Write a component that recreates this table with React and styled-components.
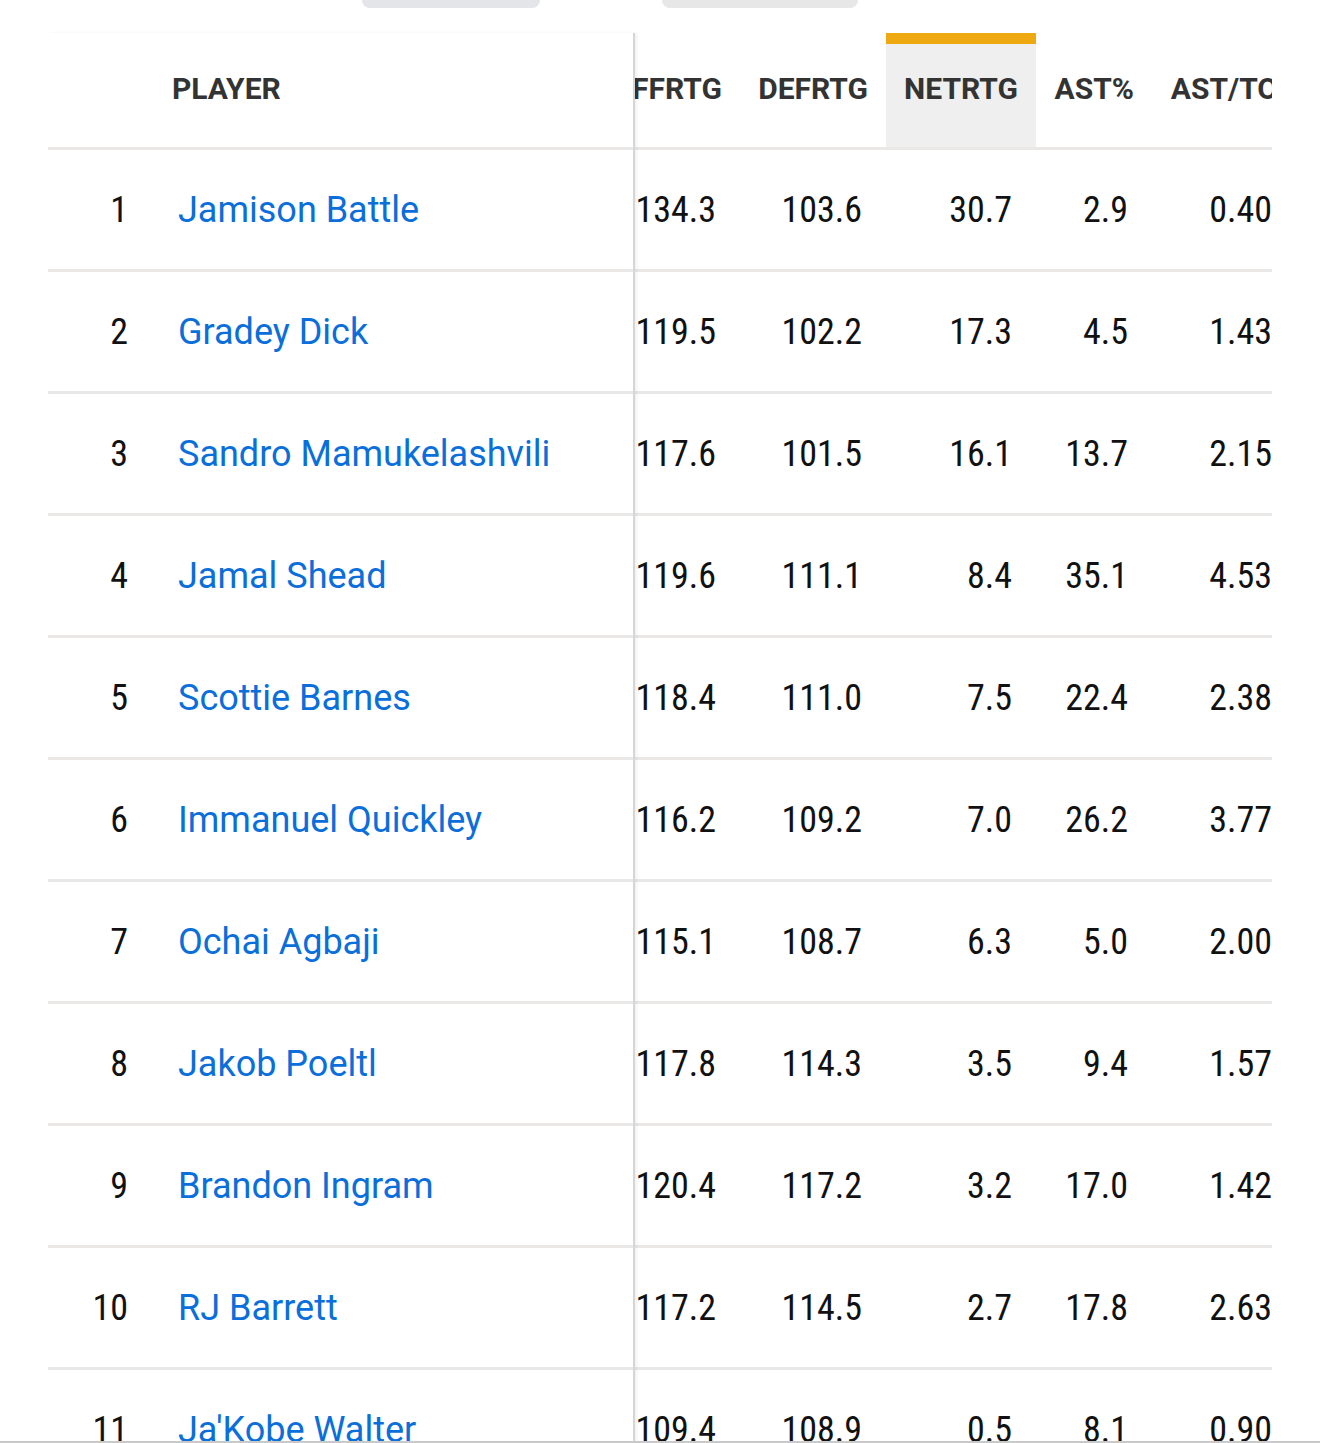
import React from "react";
import styled, { createGlobalStyle } from "styled-components";

const GlobalStyle = createGlobalStyle`
  html, body {
    margin: 0;
    padding: 0;
    background: #ffffff;
  }
  body {
    font-family: Roboto, "Noto Sans", sans-serif;
    color: #111;
  }
`;

const Page = styled.div`
  position: relative;
  width: 1320px;
  height: 1443px;
  overflow: hidden;
  background: #fff;
`;

const TabStrip = styled.div`
  display: flex;
  height: 8px;
  padding-left: 362px;
  gap: 122px;
  margin-bottom: 25px;
`;

const TabStub = styled.div`
  width: ${(p) => p.w}px;
  height: 8px;
  background: ${(p) => p.bg};
  border-radius: 0 0 9px 9px;
`;

const Table = styled.div`
  display: flex;
  margin-left: 48px;
  width: 1224px;
`;

const Frozen = styled.div`
  width: 585px;
  flex: none;
  border-right: 2px solid #d6d6d6;
  box-shadow: 2px 0 3px rgba(0, 0, 0, 0.06);
  position: relative;
  z-index: 1;
  background: #fff;
`;

const Scroller = styled.div`
  flex: 1;
  overflow: hidden;
`;

const Slide = styled.div`
  margin-left: -41px;
  width: max-content;
`;

const HeadRow = styled.div`
  display: flex;
  height: 114px;
  border-bottom: 3px solid #e9e8e6;
`;

const Row = styled.div`
  display: flex;
  height: 119px;
  border-bottom: 3px solid #e9e8e6;
  align-items: center;
`;

const HeadCell = styled.div`
  width: ${(p) => p.w}px;
  flex: none;
  box-sizing: border-box;
  display: flex;
  align-items: center;
  justify-content: ${(p) => (p.left ? "flex-start" : "flex-end")};
  padding: 0 18px 15px ${(p) => p.pl || 0}px;
  border-top: 11px solid ${(p) => (p.active ? "#eea910" : "transparent")};
  background: ${(p) => (p.active ? "#efefef" : "transparent")};
  font-family: Roboto, sans-serif;
  font-weight: 700;
  font-size: 30px;
  color: #333;
  text-transform: uppercase;
  white-space: nowrap;
`;

const Rank = styled.div`
  width: 80px;
  flex: none;
  text-align: right;
  font-family: "Roboto Condensed", Roboto, sans-serif;
  font-stretch: condensed;
  font-size: 36px;
  color: #111;
`;

const Name = styled.a`
  margin-left: 50px;
  font-family: Roboto, sans-serif;
  font-size: 36px;
  color: #0a6edb;
  text-decoration: none;
  white-space: nowrap;
`;

const Stat = styled.div`
  width: ${(p) => p.w}px;
  flex: none;
  box-sizing: border-box;
  padding-right: 24px;
  text-align: right;
  font-family: "Roboto Condensed", Roboto, sans-serif;
  font-stretch: condensed;
  font-size: 36px;
  color: #111;
`;

const BottomEdge = styled.div`
  position: absolute;
  z-index: 2;
  left: 0;
  right: 0;
  bottom: 0;
  height: 2px;
  background: #c9c9c9;
`;

const columns = [
  { key: "off", label: "OFFRTG", w: 146 },
  { key: "def", label: "DEFRTG", w: 146 },
  { key: "net", label: "NETRTG", w: 150, active: true },
  { key: "ast", label: "AST%", w: 116 },
  { key: "ato", label: "AST/TO", w: 144 },
];

const players = [
  ["Jamison Battle", "134.3", "103.6", "30.7", "2.9", "0.40"],
  ["Gradey Dick", "119.5", "102.2", "17.3", "4.5", "1.43"],
  ["Sandro Mamukelashvili", "117.6", "101.5", "16.1", "13.7", "2.15"],
  ["Jamal Shead", "119.6", "111.1", "8.4", "35.1", "4.53"],
  ["Scottie Barnes", "118.4", "111.0", "7.5", "22.4", "2.38"],
  ["Immanuel Quickley", "116.2", "109.2", "7.0", "26.2", "3.77"],
  ["Ochai Agbaji", "115.1", "108.7", "6.3", "5.0", "2.00"],
  ["Jakob Poeltl", "117.8", "114.3", "3.5", "9.4", "1.57"],
  ["Brandon Ingram", "120.4", "117.2", "3.2", "17.0", "1.42"],
  ["RJ Barrett", "117.2", "114.5", "2.7", "17.8", "2.63"],
  ["Ja'Kobe Walter", "109.4", "108.9", "0.5", "8.1", "0.90"],
];

export default function App() {
  return (
    <Page>
      <GlobalStyle />
      <TabStrip>
        <TabStub w={178} bg="#e4e5e9" />
        <TabStub w={196} bg="#e8e7e7" />
      </TabStrip>
      <Table>
        <Frozen>
          <HeadRow>
            <HeadCell w={585} left pl={124}>
              Player
            </HeadCell>
          </HeadRow>
          {players.map((p, i) => (
            <Row key={p[0]}>
              <Rank>{i + 1}</Rank>
              <Name href="#">{p[0]}</Name>
            </Row>
          ))}
        </Frozen>
        <Scroller>
          <Slide>
            <HeadRow>
              {columns.map((c) => (
                <HeadCell key={c.key} w={c.w} active={c.active}>
                  {c.label}
                </HeadCell>
              ))}
            </HeadRow>
            {players.map((p) => (
              <Row key={p[0]}>
                {columns.map((c, j) => (
                  <Stat key={c.key} w={c.w}>
                    {p[j + 1]}
                  </Stat>
                ))}
              </Row>
            ))}
          </Slide>
        </Scroller>
      </Table>
      <BottomEdge />
    </Page>
  );
}
